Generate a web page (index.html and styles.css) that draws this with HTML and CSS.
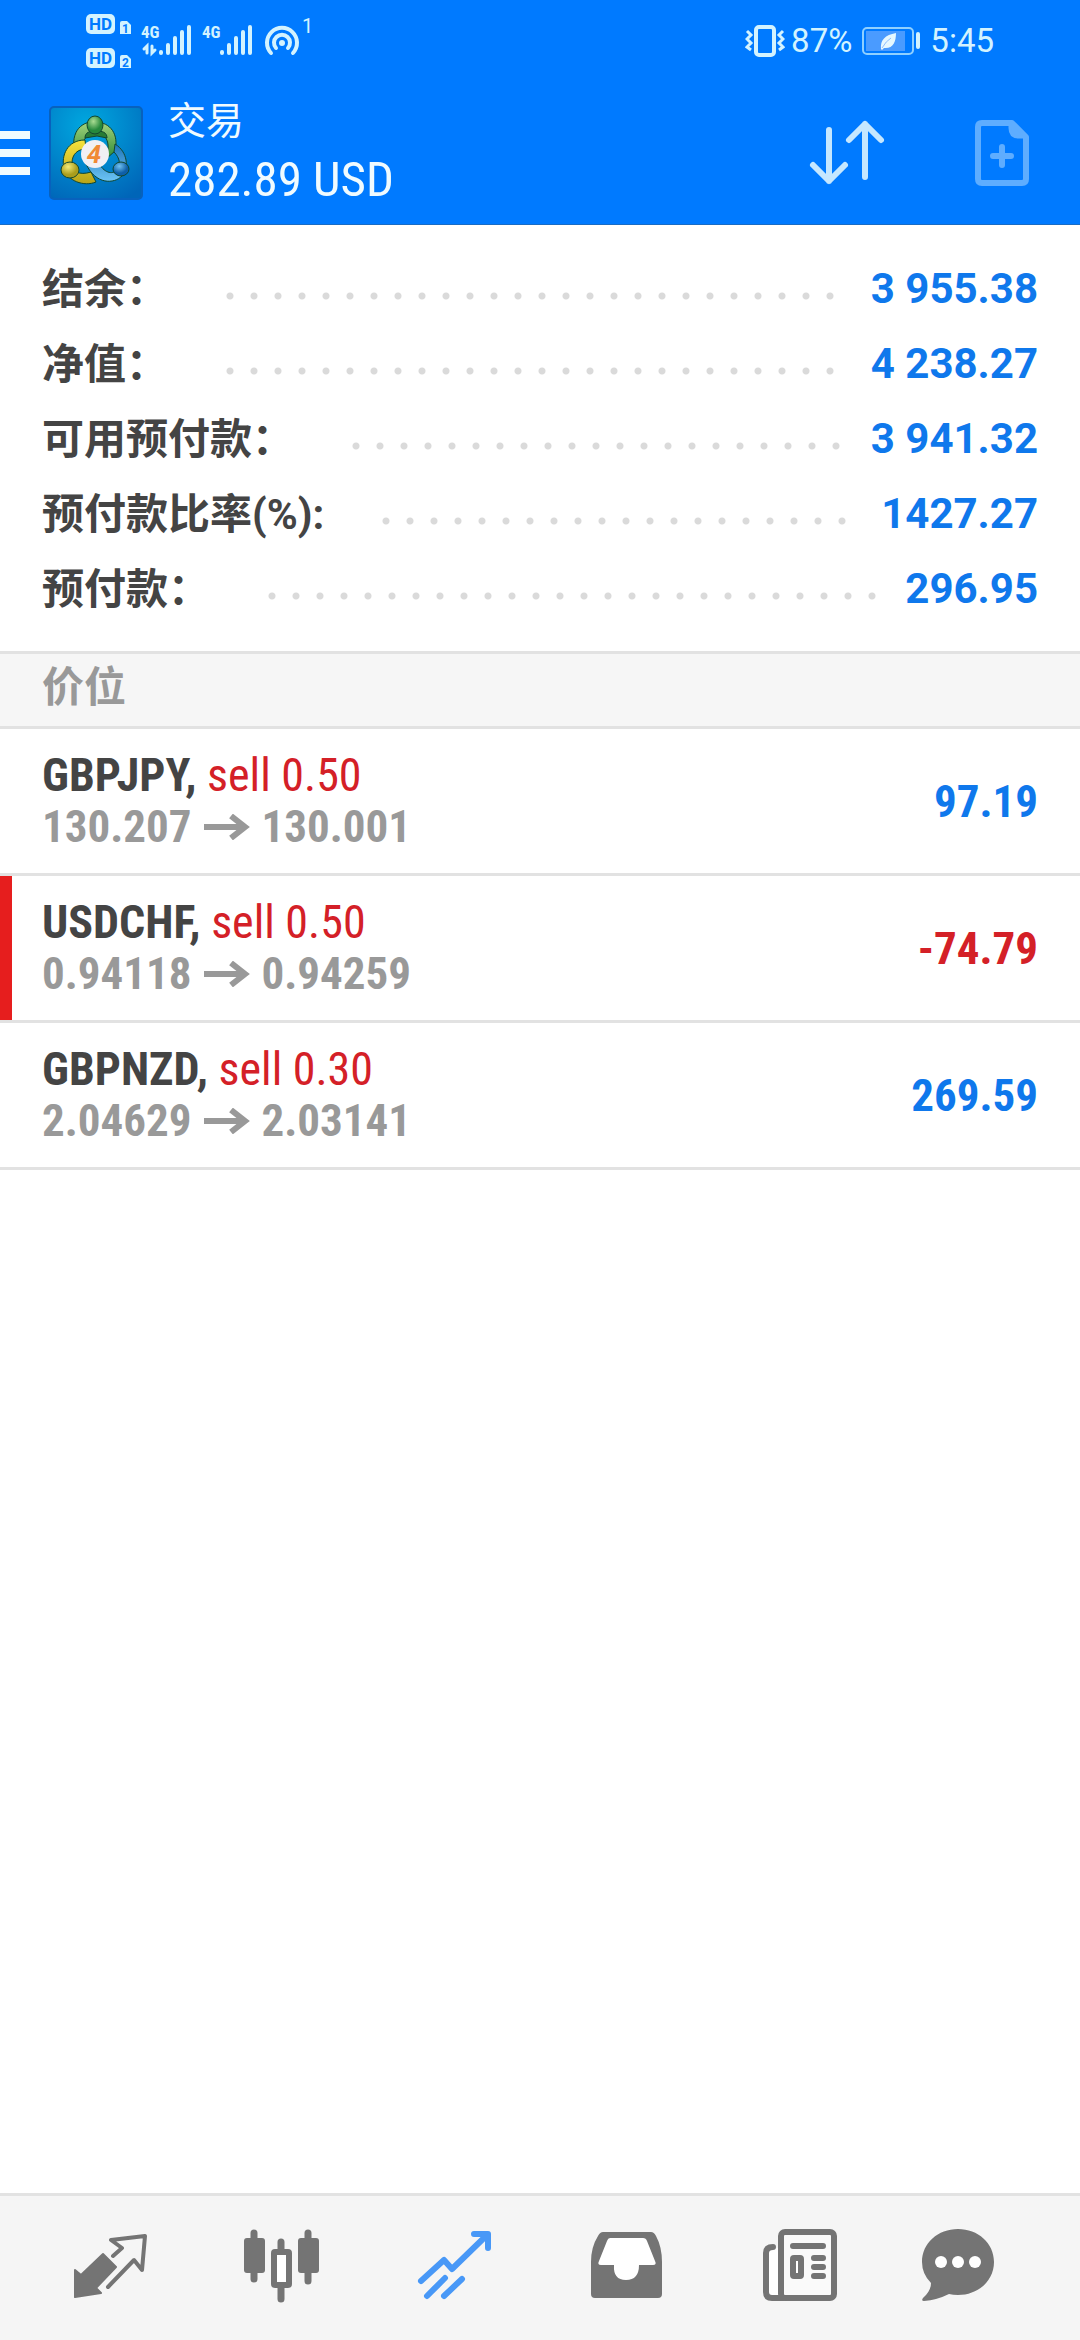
FILE: index.html
```html
<!DOCTYPE html>
<html lang="zh-CN">
<head>
<meta charset="utf-8">
<meta name="viewport" content="width=device-width, initial-scale=1">
<title>交易</title>
<link rel="stylesheet" href="styles.css">
</head>
<body>
<div class="top">
  <div class="status">
    <svg class="status-left" width="232" height="81" viewBox="84 0 232 81" aria-hidden="true">
      <g fill="#d3f3ff">
        <rect x="86" y="14" width="29" height="20" rx="5"/>
        <path d="M120 23q0-2 2-2h5l4 4v9h-11z"/>
        <rect x="86" y="48" width="29" height="20" rx="5"/>
        <path d="M120 57q0-2 2-2h5l4 4v9h-11z"/>
      </g>
      <g class="tag">
        <text x="89" y="30">HD</text><text x="89" y="64">HD</text>
        <text class="tiny" x="122" y="33">1</text><text class="tiny" x="122" y="67">2</text>
      </g>
      <g class="net"><text x="141" y="38">4G</text><text x="202" y="38">4G</text></g>
      <g stroke="#d3f3ff" stroke-width="4" stroke-linecap="round" fill="none">
        <path d="M161 52v1M168 45v8M175 38v15M182 32v21M189 27v26"/>
        <path d="M222 52v1M229 45v8M236 38v15M243 32v21M250 27v26"/>
        <path d="M271 53a15 15 0 1 1 22 0M276 48a8 8 0 1 1 12 0"/>
        <path stroke-width="3" d="M147 53v-7l-3 3M152 46v7l3-3"/>
      </g>
      <circle cx="282" cy="43" r="3" fill="#d3f3ff"/>
      <text class="hot" x="302" y="33">1</text>
    </svg>
    <div class="status-right">
      <svg width="40" height="34" viewBox="0 0 40 34" fill="none" stroke="#d3f3ff" stroke-width="4" aria-hidden="true">
        <rect x="11" y="3" width="18" height="28" rx="3"/>
        <path stroke-width="3" d="M2 7l4 4-4 4 4 4-4 4 4 3M38 7l-4 4 4 4-4 4 4 4-4 3"/>
      </svg>
      <span>87%</span>
      <svg class="battery" width="58" height="28" viewBox="0 0 58 28" aria-hidden="true">
        <rect x="1" y="1" width="50" height="26" rx="4" fill="none" stroke="#8fd0ff" stroke-width="2"/>
        <rect x="4" y="4" width="39" height="20" fill="#4a9bff"/>
        <path d="M19 22c-1-9 4-14 15-16 0 9-3 16-12 15l-2 2z" fill="#e6f8ff"/>
        <path d="M20 21q4-7 9-10" stroke="#8fbfff" fill="none"/>
        <path d="M56 7v13" stroke="#d3f3ff" stroke-width="4" stroke-linecap="round"/>
      </svg>
      <span>5:45</span>
    </div>
  </div>
  <header class="appbar">
    <button class="menu" aria-label="菜单"><span></span><span></span><span></span></button>
    <svg class="logo" width="94" height="94" viewBox="0 0 94 94" aria-hidden="true">
      <defs>
        <radialGradient id="bg" cx=".4" cy=".2" r=".9"><stop offset="0" stop-color="#00a8e0"/><stop offset="1" stop-color="#0065b8"/></radialGradient>
        <linearGradient id="gr" x2="0" y2="1"><stop offset="0" stop-color="#a5d47c"/><stop offset="1" stop-color="#2c8a35"/></linearGradient>
        <linearGradient id="ye" x2="0" y2="1"><stop offset="0" stop-color="#f6e23c"/><stop offset="1" stop-color="#b8a418"/></linearGradient>
        <linearGradient id="bl" x2="0" y2="1"><stop offset="0" stop-color="#1d74b8"/><stop offset="1" stop-color="#6cc4f5"/></linearGradient>
        <radialGradient id="gb" cx=".4" cy=".3"><stop offset="0" stop-color="#a9dc92"/><stop offset="1" stop-color="#26893c"/></radialGradient>
        <radialGradient id="yb" cx=".4" cy=".3"><stop offset="0" stop-color="#f2ea78"/><stop offset="1" stop-color="#aa9d1c"/></radialGradient>
        <radialGradient id="bb" cx=".4" cy=".3"><stop offset="0" stop-color="#72c2f0"/><stop offset="1" stop-color="#0e5fa8"/></radialGradient>
      </defs>
      <rect x="1" y="1" width="92" height="92" rx="4" fill="url(#bg)" stroke="#0861bd" stroke-width="2"/>
      <g stroke="#12472f" stroke-width="1">
        <path d="M25 44C22 20 38 15 46 16c16 0 24 13 20 29l-9 8C62 37 58 28 47 27c-9 0-14 7-13 15z" fill="url(#gr)"/>
        <path d="M36 34C18 34 12 50 15 62c3 13 20 19 32 14l-5-10c-12 4-20-1-19-9 0-9 6-14 14-14z" fill="url(#ye)"/>
        <path d="M66 38c13 8 14 24 7 32-8 8-26 9-36-12l12-2c6 11 14 13 19 8 4-5 3-12-3-18z" fill="url(#bl)"/>
        <path d="M36 32c0-6 5-7 11-7s11 1 11 7l-10-2z" fill="#287c35"/>
        <ellipse cx="46" cy="19" rx="8" ry="9" fill="url(#gb)"/>
        <ellipse cx="21" cy="64" rx="9" ry="8" fill="url(#yb)"/>
        <ellipse cx="72" cy="63" rx="8" ry="7" fill="url(#bb)"/>
      </g>
      <circle cx="46" cy="48" r="14" fill="#f1f0f4"/>
      <text class="logo-num" x="45" y="57" text-anchor="middle">4</text>
    </svg>
    <div class="heading">
      <h1>交易</h1>
      <p>282.89 USD</p>
    </div>
    <button class="tool" aria-label="排序">
      <svg width="80" height="80" viewBox="0 0 80 80" fill="none" stroke="#c5e7ff" stroke-width="6" stroke-linecap="round" stroke-linejoin="round" aria-hidden="true">
        <path d="M22 17v51M6 52l16 16 16-16M58 64V11M42 27l16-16 16 16"/>
      </svg>
    </button>
    <button class="tool" aria-label="新订单">
      <svg width="80" height="80" viewBox="0 0 80 80" fill="none" stroke="#5eadff" stroke-width="6" stroke-linejoin="round" stroke-linecap="round" aria-hidden="true">
        <path d="M20 10h30l14 14v42q0 4-4 4H20q-4 0-4-4V14q0-4 4-4zM40 34v18M31 43h18"/>
        <path d="M48 10v5q0 9 9 9h7L50 10z" fill="#5eadff" stroke-width="3"/>
      </svg>
    </button>
  </header>
</div>

<main>
  <dl class="summary">
    <div class="line"><dt>结余：</dt><dd class="leader" aria-hidden="true"></dd><dd>3 955.38</dd></div>
    <div class="line"><dt>净值：</dt><dd class="leader" aria-hidden="true"></dd><dd>4 238.27</dd></div>
    <div class="line"><dt>可用预付款：</dt><dd class="leader" aria-hidden="true"></dd><dd>3 941.32</dd></div>
    <div class="line"><dt>预付款比率(%):</dt><dd class="leader" aria-hidden="true"></dd><dd>1427.27</dd></div>
    <div class="line"><dt>预付款：</dt><dd class="leader" aria-hidden="true"></dd><dd>296.95</dd></div>
  </dl>
  <h2 class="section">价位</h2>
  <ul class="positions">
    <li class="position">
      <div><p class="pair">GBPJPY, <span>sell 0.50</span></p>
      <p class="prices">130.207 <svg class="arrow" viewBox="0 0 46 26" aria-label="至"><path d="M0 13h42M27 2l14 11-14 11"/></svg> 130.001</p></div>
      <p class="profit">97.19</p>
    </li>
    <li class="position marked">
      <div><p class="pair">USDCHF, <span>sell 0.50</span></p>
      <p class="prices">0.94118 <svg class="arrow" viewBox="0 0 46 26" aria-label="至"><path d="M0 13h42M27 2l14 11-14 11"/></svg> 0.94259</p></div>
      <p class="profit loss">-74.79</p>
    </li>
    <li class="position">
      <div><p class="pair">GBPNZD, <span>sell 0.30</span></p>
      <p class="prices">2.04629 <svg class="arrow" viewBox="0 0 46 26" aria-label="至"><path d="M0 13h42M27 2l14 11-14 11"/></svg> 2.03141</p></div>
      <p class="profit">269.59</p>
    </li>
  </ul>
</main>

<nav class="tabs">
  <a href="#quotes" aria-label="行情"><svg viewBox="0 0 80 80"><path fill="currentColor" stroke="currentColor" stroke-width="2" stroke-linejoin="round" d="M5 42l6 5 22-21 13 13-20 21 5 5-26 4z"/><path class="thin" d="M43 28l9-8-11-8 34-4-3 34-8-10-26 27"/></svg></a>
  <a href="#charts" aria-label="图表"><svg viewBox="0 0 80 80"><path class="bold" d="M11 5v46M38 14v10M38 58v13M65 5v48"/><g fill="currentColor"><rect x="1" y="10" width="21" height="35" rx="3"/><rect x="55" y="10" width="21" height="35" rx="3"/></g><rect class="hollow" x="31" y="24" width="15" height="33" rx="1"/></svg></a>
  <a href="#trade" class="active" aria-label="交易" aria-current="page"><svg viewBox="0 0 80 80"><path class="mid" d="M5 53l23-21 8 9L71 7M58 6h14v14M11 68l18-18M28 68l18-17"/></svg></a>
  <a href="#history" aria-label="历史"><svg viewBox="0 0 80 80"><path fill="currentColor" d="M15 4h48q3 0 5 4 6 11 6 26v32q0 4-4 4H7q-4 0-4-4V34Q3 19 10 8q2-4 5-4z"/><path fill="#fff" d="M22 10h33q3 0 4 3l8 20q2 4-2 4H51q0 15-13 15T26 37H13q-4 0-2-4l8-20q1-3 3-3z"/></svg></a>
  <a href="#news" aria-label="新闻"><svg viewBox="0 0 80 80"><rect x="5" y="20" width="16" height="50" fill="#fff"/><rect class="mid page" x="20" y="4" width="53" height="66" rx="4"/><path class="mid" d="M12 19q-7 0-7 6v39q0 6 6 6h12M32 18h30M53 30h9M53 39h9M53 48h9"/><rect class="hollow" x="32" y="30" width="8" height="18" rx="1"/></svg></a>
  <a href="#chat" aria-label="消息"><svg viewBox="0 0 80 80"><path fill="currentColor" d="M39 1c20 0 36 14 36 33S59 67 39 67q-5 0-9-1-12 6-25 7-3 0-1-3 8-7 8-15Q3 46 3 34C3 15 19 1 39 1z"/><g fill="#fff"><circle cx="22" cy="34" r="6"/><circle cx="39" cy="34" r="6"/><circle cx="56" cy="34" r="6"/></g></svg></a>
</nav>
</body>
</html>
```
FILE: styles.css
```css
* { box-sizing: border-box; }

body, h1, h2, p, dl, dd, ul { margin: 0; padding: 0; }

body {
  display: flex;
  flex-direction: column;
  min-height: 100vh;
  background: #fff;
  color: #444;
  font-family: Roboto, "Noto Sans CJK SC", sans-serif;
}

svg { display: block; }

button { border: 0; padding: 0; background: none; }

.top {
  background: #007aff;
  border-bottom: 1px solid #1a6cc4;
  color: #f0fbff;
}

.status {
  display: flex;
  justify-content: space-between;
  height: 81px;
  padding: 0 86px 0 84px;
}

.status-right {
  display: flex;
  align-items: center;
  gap: 6px;
  color: #d3f3ff;
  font-size: 33px;
}

.battery { margin: 0 4px; }

.tag { fill: #007aff; font: 700 17px Roboto, sans-serif; }
.tiny { font-size: 12px; }
.net { fill: #d3f3ff; font: 700 17px "Roboto Condensed", "Liberation Sans Narrow", sans-serif; }
.hot { fill: #d3f3ff; font: 20px Roboto, sans-serif; }

.appbar {
  display: flex;
  align-items: center;
  height: 143px;
  padding-right: 38px;
}

.menu {
  display: grid;
  gap: 10px;
  width: 30px;
  margin-right: 19px;
}

.menu span { height: 8px; background: #f0fbff; }

.logo { margin-right: 25px; }
.logo-num { fill: #f08a35; font: italic 700 26px Roboto, sans-serif; }

.heading { flex: 1; }
.heading h1 { font-size: 38px; font-weight: 400; line-height: 54px; }
.heading p {
  font: 49px/64px "Roboto Condensed", "Liberation Sans Narrow", sans-serif;
}

.tool { margin-left: 75px; }

main { flex: 1; }

.summary {
  padding: 26px 42px 25px;
  font-size: 42px;
  font-weight: 700;
}

.line { display: flex; align-items: center; height: 75px; }
.line dt { padding-bottom: 6px; }
.line dd { color: #0f78ec; }

.line .leader {
  flex: 1;
  height: 22px;
  margin: 0 24px 0 50px;
  background: radial-gradient(circle, #dadada 3px, transparent 4px) left bottom / 24px 8px repeat-x;
}

.section {
  height: 78px;
  padding: 0 42px;
  border: solid #e2e2e2;
  border-width: 3px 0;
  background: #f6f6f6;
  color: #999;
  font-size: 42px;
  line-height: 68px;
}

.positions { list-style: none; }

.position {
  display: flex;
  align-items: center;
  justify-content: space-between;
  height: 147px;
  padding: 0 42px;
  border-bottom: 3px solid #e2e2e2;
  font: 700 45px/51px "Roboto Condensed", "Liberation Sans Narrow", sans-serif;
}

.marked { box-shadow: inset 12px 0 #e61e1e; }

.pair { font-size: 46px; }
.pair span { color: #d42027; font-weight: 400; }
.prices { display: flex; align-items: center; gap: 12px; color: #999; }
.arrow { width: 46px; height: 26px; fill: none; stroke: #999; stroke-width: 6; }
.profit { color: #0f78ec; }
.loss { color: #d42027; }

.tabs {
  display: grid;
  grid-template-columns: repeat(5, 6fr) 5fr;
  align-items: center;
  justify-items: center;
  height: 147px;
  padding: 0 49px 0 24px;
  border-top: 3px solid #e2e2e2;
  background: #f5f5f5;
}

.tabs a { color: #747474; }
.tabs .active { color: #4898f7; }
.tabs svg { width: 80px; height: 80px; }

.thin, .mid, .bold { fill: none; stroke: currentColor; stroke-linecap: round; stroke-linejoin: round; }
.thin { stroke-width: 4; }
.mid { stroke-width: 6; }
.bold { stroke-width: 7; }
.page { fill: #fafafa; }
.hollow { fill: #fff; stroke: currentColor; stroke-width: 6; }
```
